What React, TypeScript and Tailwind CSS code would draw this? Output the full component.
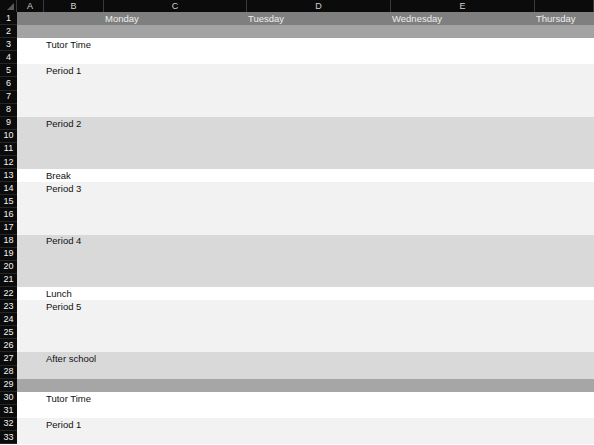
const cols = [
  { key: 'A', w: 'w-[27px]' },
  { key: 'B', w: 'w-[60px]' },
  { key: 'C', w: 'w-[143px]' },
  { key: 'D', w: 'w-[144px]' },
  { key: 'E', w: 'w-[144px]' },
  { key: '', w: 'flex-1' },
]

const days = ['Monday', 'Tuesday', 'Wednesday', 'Thursday']

type Row = { n: number; bg: string; label?: string }

function block(start: number, count: number, bg: string, label?: string): Row[] {
  return Array.from({ length: count }, (_, i) => ({
    n: start + i,
    bg,
    label: i === 0 ? label : undefined,
  }))
}

const rows: Row[] = [
  ...block(3, 2, 'bg-white', 'Tutor Time'),
  ...block(5, 4, 'bg-[#f2f2f2]', 'Period 1'),
  ...block(9, 4, 'bg-[#d9d9d9]', 'Period 2'),
  ...block(13, 1, 'bg-white', 'Break'),
  ...block(14, 4, 'bg-[#f2f2f2]', 'Period 3'),
  ...block(18, 4, 'bg-[#d9d9d9]', 'Period 4'),
  ...block(22, 1, 'bg-white', 'Lunch'),
  ...block(23, 4, 'bg-[#f2f2f2]', 'Period 5'),
  ...block(27, 2, 'bg-[#d9d9d9]', 'After school'),
  ...block(29, 1, 'bg-[#a6a6a6]'),
  ...block(30, 2, 'bg-white', 'Tutor Time'),
  ...block(32, 2, 'bg-[#f2f2f2]', 'Period 1'),
]

function RowNum({ n }: { n: number }) {
  return (
    <div className="w-[17px] shrink-0 h-full bg-[#0b0b0b] border-b border-[#262626] text-[#f2f2f2] text-[9px] flex items-center justify-center">
      {n}
    </div>
  )
}

export default function App() {
  return (
    <div
      className="w-[594px] h-[445px] overflow-hidden bg-white text-[9.5px] leading-none"
      style={{ fontFamily: '"Liberation Sans", Arial, sans-serif' }}
    >
      {/* column letters */}
      <div className="flex h-[12px] bg-[#0b0b0b] text-[#d0d0d0] text-[9px]">
        <div className="w-[17px] shrink-0 relative border-r border-[#3a3a3a]">
          <div className="absolute right-[2px] bottom-[2px] w-0 h-0 border-l-[7px] border-l-transparent border-b-[7px] border-b-[#5a5a5a]" />
        </div>
        {cols.map((c, i) => (
          <div
            key={i}
            className={`${c.w} shrink-0 flex items-center justify-center border-r border-[#3a3a3a]`}
          >
            {c.key}
          </div>
        ))}
      </div>

      {/* row 1: days */}
      <div className="flex h-[13.1px]">
        <RowNum n={1} />
        <div className="flex flex-1 bg-[#7f7f7f] text-[#ededed]">
          <div className="w-[27px] shrink-0" />
          <div className="w-[60px] shrink-0" />
          {days.map((d, i) => (
            <div
              key={d}
              className={`${i === 0 ? 'w-[143px]' : 'w-[144px]'} shrink-0 flex items-center pl-[1px]`}
            >
              {d}
            </div>
          ))}
        </div>
      </div>

      {/* row 2 */}
      <div className="flex h-[13.1px]">
        <RowNum n={2} />
        <div className="flex-1 bg-[#a3a3a3]" />
      </div>

      {rows.map((r) => (
        <div key={r.n} className="flex h-[13.1px]">
          <RowNum n={r.n} />
          <div className={`flex-1 flex items-center ${r.bg} text-[#111]`}>
            <div className="w-[27px] shrink-0" />
            <div className="pl-[2px] whitespace-nowrap">{r.label}</div>
          </div>
        </div>
      ))}
    </div>
  )
}
